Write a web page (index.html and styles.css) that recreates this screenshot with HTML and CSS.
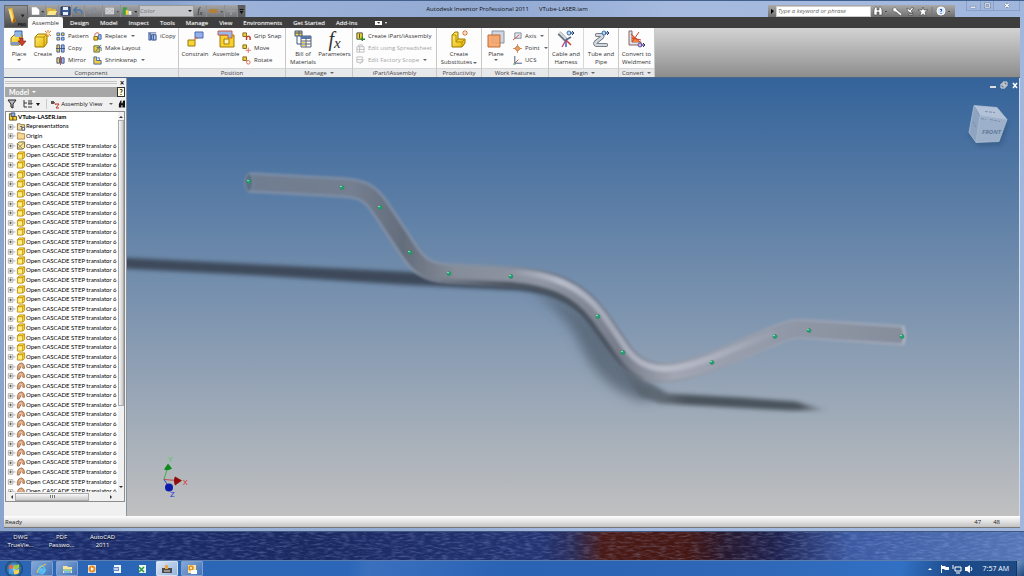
FILE: index.html
```html
<!DOCTYPE html>
<html lang="en">
<head>
<meta charset="utf-8">
<title>Autodesk Inventor Professional 2011</title>
<link rel="stylesheet" href="styles.css">
</head>
<body>
<svg class="sprite" aria-hidden="true">
  <defs>
    <linearGradient id="gold" x1="0" y1="0" x2="1" y2="1"><stop offset="0" stop-color="#fff07a"/><stop offset="1" stop-color="#e8b400"/></linearGradient>
    <symbol id="i-place" viewBox="0 0 18 18"><path d="M5 1h7v6H5z" fill="#8fb4e6" stroke="#3d5f9c"/><path d="M1 8l3-3h8v7l-3 3H1z" fill="url(#gold)" stroke="#8c6a10"/><path d="M5 2h6v5H5z" fill="#8fb4e6"/><path d="M1 12h8v3H1z" fill="#7c98c8"/><path d="M9 8h4v3h3l-4 5-4-5h2V8z" fill="#c9402c" stroke="#7d1c10" stroke-width=".6"/></symbol>
    <symbol id="i-create" viewBox="0 0 18 18"><path d="M1 7l3-3h9v9l-3 4H1z" fill="url(#gold)" stroke="#9a7800"/><path d="M1 7h9v10M10 7l3-3" fill="none" stroke="#b89000"/><path d="M14 0v7M11 1l6 5M17 1l-6 5" stroke="#d8702c"/><circle cx="14" cy="3.500" r="1.500" fill="#ffe9a0"/></symbol>
    <symbol id="i-pattern" viewBox="0 0 10 10"><path d="M1 1h3v3H1zM6 1h3v3H6zM1 6h3v3H1z" fill="#f2cd3c" stroke="#3c62a8"/><path d="M6 6h3v3H6z" fill="#9cbcf0" stroke="#3c62a8"/></symbol>
    <symbol id="i-copy" viewBox="0 0 10 10"><path d="M1 1h3v8H1z" fill="#f2cd3c" stroke="#3c5288"/><path d="M6 1h3v8H6z" fill="#9cbcf0" stroke="#3c5288"/><path d="M0 5h10" stroke="#3c5288"/></symbol>
    <symbol id="i-mirror" viewBox="0 0 10 10"><path d="M1 2h3v6H1z" fill="#f2cd3c" stroke="#3c5288"/><path d="M6 2h3v6H6z" fill="#9cbcf0" stroke="#3c5288"/><path d="M5 0v10" stroke="#c23a2c"/></symbol>
    <symbol id="i-replace" viewBox="0 0 10 10"><path d="M1 5h4v4H1z" fill="#f2cd3c" stroke="#876400"/><path d="M6 3h3v5H6z" fill="#9cbcf0" stroke="#3c62a8"/><path d="M2 4c0-3 3-4 5-2" fill="none" stroke="#c23a2c"/></symbol>
    <symbol id="i-layout" viewBox="0 0 10 10"><path d="M1 2h6v7H1z" fill="#f2cd3c" stroke="#5c6a48"/><path d="M3 8l6-7M4 4h5v4" fill="none" stroke="#48688c"/></symbol>
    <symbol id="i-shrink" viewBox="0 0 10 10"><path d="M1 1h3v4h5v4H1z" fill="#f2cd3c" stroke="#3c62a8"/><path d="M5 2h2v3" fill="none" stroke="#3c62a8"/></symbol>
    <symbol id="i-icopy" viewBox="0 0 10 10"><path d="M1 2h2v7H1zM4 3h5v6H4z" fill="#a8c4f0" stroke="#30508c"/><path d="M0 1h9M6 3v6" stroke="#30508c"/></symbol>
    <symbol id="i-constrain" viewBox="0 0 18 18"><path d="M9 2h8v6H9z" fill="#94b0ec" stroke="#4a68ac"/><path d="M2 10h7v6H2z" fill="#f6d43c" stroke="#9a7800"/><path d="M9 10V8h3" fill="none" stroke="#d85a30"/></symbol>
    <symbol id="i-assemble" viewBox="0 0 18 18"><path d="M3 5h14v12H3z" fill="#f8d030" stroke="#a07c00"/><path d="M7 9h5v5H7z" fill="#fff3c0" stroke="#a07c00"/><path d="M1 1h14v7h-4V5H1z" fill="#9ab8ec" stroke="#c85a44"/></symbol>
    <symbol id="i-grip" viewBox="0 0 10 10"><path d="M1 1h4v4H1z" fill="#f2cd3c" stroke="#7c6410"/><path d="M5 9V6q2-3 4 0v3" fill="none" stroke="#c82c20" stroke-width="1.500"/></symbol>
    <symbol id="i-move" viewBox="0 0 10 10"><path d="M1 1h4v4H1z" fill="#f2cd3c" stroke="#7c6410"/><path d="M7 4v6M4 7h6" stroke="#e0705c"/></symbol>
    <symbol id="i-rotate" viewBox="0 0 10 10"><path d="M1 1h4v4H1z" fill="#f2cd3c" stroke="#7c6410"/><circle cx="7" cy="7" r="2" fill="none" stroke="#e0604c"/></symbol>
    <symbol id="i-bom" viewBox="0 0 18 18"><path d="M1 1h7v5H1z" fill="#f4cf38" stroke="#3c5890"/><path d="M5 1v5M1 3h7M3 6v8h4" fill="none" stroke="#3c5890"/><path d="M7 6h10v11H7z" fill="#fff" stroke="#59616c"/><path d="M7 6h10v3H7z" fill="#5678ac"/><path d="M7 11h10M7 14h10M12 8v9" stroke="#59616c"/><path d="M8 12h3v1H8zM8 15h3v1H8z" fill="#f4cf38"/></symbol>
    <symbol id="i-ipart" viewBox="0 0 10 10"><path d="M1 1h6v7H1z" fill="#f8dc28" stroke="#444"/><path d="M4 2v5" stroke="#333"/><path d="M7 5v5M5 8h5" stroke="#2c8c30" stroke-width="1.500"/></symbol>
    <symbol id="i-sheet" viewBox="0 0 10 10"><path d="M1 3h8v6H1zM3 3V1h4v2M1 6h8M4 3v6" fill="none" stroke="#bbb"/></symbol>
    <symbol id="i-factory" viewBox="0 0 10 10"><path d="M1 1h6v6H1zM1 4h6M4 9l5-5" fill="none" stroke="#bbb"/></symbol>
    <symbol id="i-subst" viewBox="0 0 18 18"><path d="M2 5l3-3h3v7h7v4l-3 4H2z" fill="url(#gold)" stroke="#9a7800"/><path d="M2 5h4v7h6v5M6 12l2-3M12 12l3-3" fill="none" stroke="#b48e00"/><path d="M15 0v6M12 3h6M13 1l4 4M17 1l-4 4" stroke="#d8702c"/><circle cx="15" cy="3" r="1" fill="#fff"/></symbol>
    <symbol id="i-plane" viewBox="0 0 18 18"><path d="M5 1h12v12H5z" fill="#cfd6e0" stroke="#8893a4"/><path d="M1 5h12v12H1z" fill="#f6a368" fill-opacity=".9" stroke="#c06c34"/></symbol>
    <symbol id="i-axis" viewBox="0 0 10 10"><path d="M2 1h7v6H2z" fill="#e4e8ee" stroke="#7c8798"/><path d="M0 9l7-6" stroke="#c8442c"/></symbol>
    <symbol id="i-point" viewBox="0 0 10 10"><path d="M5 0v10M0 5h10" stroke="#c89070"/><path d="M5 2l3 3-3 3-3-3z" fill="#f0a060" stroke="#b86828"/></symbol>
    <symbol id="i-ucs" viewBox="0 0 10 10"><path d="M2 0v8h8" fill="none" stroke="#38507c"/><path d="M2 8l4-4" stroke="#c8442c"/><path d="M0 9h3" stroke="#30904c"/></symbol>
    <symbol id="i-cable" viewBox="0 0 18 18"><path d="M2 3l7 7" stroke="#68737e" stroke-width="4"/><path d="M2 2l7 7" stroke="#d7dde2" stroke-width="2"/><path d="M9 10l-4 7" stroke="#c84c84" stroke-width="1.500"/><path d="M9 10v7" stroke="#3b62be" stroke-width="1.500"/><path d="M9 10l5 5" stroke="#cf3e30" stroke-width="1.500"/><path d="M9 10l5-3" stroke="#50688c" stroke-width="1.500"/><circle cx="12" cy="3" r="2" fill="#b9d7f4" stroke="#3876ac"/><path d="M13 3h4M15 1l2 2-2 2" stroke="#283e70" fill="none"/></symbol>
    <symbol id="i-tube" viewBox="0 0 18 18"><path d="M5 5h4q3 1 0 3l-5 4q-2 2 1 3h9" fill="none" stroke="#59626e" stroke-width="4" stroke-linecap="round"/><path d="M5 5h4q3 1 0 3l-5 4q-2 2 1 3h9" fill="none" stroke="#d2d8de" stroke-width="2.500" stroke-linecap="round"/><circle cx="12" cy="3" r="2" fill="#b9d7f4" stroke="#3876ac"/><path d="M13 3h4M15 1l2 2-2 2" stroke="#283e70" fill="none"/></symbol>
    <symbol id="i-weld" viewBox="0 0 18 18"><path d="M1 1h3v11h9v3H1z" fill="#dfe3e8" stroke="#8c6064"/><path d="M4 5v7h8z" fill="#f2843c"/><path d="M3 4l10 9M11 2L4 12M4 8l9 2" stroke="#c84028"/><circle cx="12" cy="15" r="2" fill="#c6b8ee" stroke="#6850a0"/><path d="M13 15h4M15 13l2 2-2 2" stroke="#303060" fill="none"/></symbol>
    <symbol id="i-cube" viewBox="0 0 10 10"><path d="M1 3l2-2h6v6L7 9H1z" fill="#ffe24a" stroke="#c08c10"/><path d="M1 3h6v6M7 3l2-2" fill="none" stroke="#c08c10"/><path d="M2 4h4v4H2z" fill="#fff08c"/></symbol>
    <symbol id="i-surf" viewBox="0 0 10 10"><path d="M1 9V5q1-4 5-4 3 1 3 6L7 7Q6 4 5 5L3 9z" fill="#dba078" stroke="#a07454"/><path d="M3 4q3-2 3 2" fill="none" stroke="#f6d3b8"/></symbol>
    <symbol id="i-sketch" viewBox="0 0 10 10"><path d="M1 3l2-2h6v6L7 9H1z" fill="#fbe48a" stroke="#6c5c38"/><path d="M1 3l6 6M8 2L2 8" stroke="#7c7c7c"/></symbol>
    <symbol id="i-folder" viewBox="0 0 10 10"><path d="M1 9V2h3l1 1h4v6z" fill="#f8d894" stroke="#b08848"/></symbol>
    <symbol id="i-rep" viewBox="0 0 10 10"><path d="M1 9V2h3l1 1h4v6z" fill="#f8d894" stroke="#807048"/><path d="M4 5h2v3M6 6h3v3H6z" fill="#fff" stroke="#48586c"/></symbol>
    <symbol id="i-asm" viewBox="0 0 10 10"><path d="M1 2h4v7H1z" fill="#f8cc30" stroke="#60501c"/><path d="M3 1h4v4H3z" fill="#8cacdc" stroke="#34507c"/><path d="M5 5h4v4H5z" fill="#f8cc30" stroke="#60501c"/></symbol>
    <symbol id="i-exp" viewBox="0 0 10 10"><path d="M2 3h5v5H2z" fill="#fff" stroke="#a8a8a8"/><path d="M3 5.500h3M4.500 4v3" stroke="#555"/><path d="M7 5.500h3" stroke="#aaa"/></symbol>
  </defs>
</svg>

<main class="window">
  <header class="titlebar">
    <button class="app" aria-label="Application menu">
      <svg viewBox="0 0 22 22"><path d="M3 3l4-1 2 9 2 5-4 2-2-7z" fill="#f3b62c"/><path d="M3 3l3 2 2 8-1 5-2-7z" fill="#fbe08a"/><path d="M9 11l2 5-4 2z" fill="#a85f08"/><path d="M16 9h4l-2 3z" fill="#222"/></svg>
      <span>PRO</span>
    </button>
    <div class="qat">
      <button aria-label="New"><svg viewBox="0 0 18 10"><path d="M4 1h5l3 3v5H4z" fill="#fff"/><path d="M14 5h3l-1 2z" fill="#333"/></svg></button>
      <button aria-label="Open" class="q-s"><svg viewBox="0 0 12 10"><path d="M1 2h4l1 1h4v6H1z" fill="#d9b33c"/><path d="M3 5h8L9 9H1z" fill="#fbe88c"/></svg></button>
      <button aria-label="Save" class="q-s"><svg viewBox="0 0 12 10"><path d="M2 1h9v8H2z" fill="#3d5c94" stroke="#1c315c"/><path d="M4 1h5v3H4zM4 6h5v3H4z" fill="#e6edf6"/></svg></button>
      <button aria-label="Undo" class="q-s"><svg viewBox="0 0 12 10"><path d="M3 4h4q3 0 3 4M5 1L2 4l3 3" fill="none" stroke="#4878ac" stroke-width="1.500"/></svg></button>
      <button aria-label="Redo"><svg viewBox="0 0 18 10"><path d="M11 4H8Q5 4 5 8M9 1l3 3-3 3" fill="none" stroke="#8a8f97" stroke-width="1.500"/></svg></button>
      <button aria-label="Select"><svg viewBox="0 0 18 10"><path d="M3 2h8v6H3zM3 2l8 6M11 2L3 8" fill="#b7bcc2" stroke="#d8dbde"/><path d="M14 5h3l-1 2z" fill="#555"/></svg></button>
      <button aria-label="Appearance"><svg viewBox="0 0 18 10"><path d="M2 1h4v8H2z" fill="#3c9c48"/><path d="M5 4h3v5H5z" fill="#f4d23c"/><path d="M8 5h3v4H8z" fill="#e9eef4"/><path d="M14 5h3l-1 2z" fill="#222"/></svg></button>
      <span class="combo"><select aria-label="Color"><option>Color</option></select></span>
      <button aria-label="Parameters" class="q-s fx">f<sub>x</sub></button>
      <button aria-label="Measure"><svg viewBox="0 0 18 10"><path d="M2 3h9v4H2z" fill="#b57f3a"/><path d="M14 5h3l-1 2z" fill="#555"/></svg></button>
      <button aria-label="Add" class="q-s"><svg viewBox="0 0 12 10"><path d="M6 1v8M2 5h8" stroke="#94979b" stroke-width="2"/></svg></button>
      <button aria-label="Customize" class="q-x"><svg viewBox="0 0 6 10"><path d="M1 3h4v1H1zM1 5h4L3 8z" fill="#111"/></svg></button>
    </div>
    <h1 class="title"><span>Autodesk Inventor Professional 2011</span><span>VTube-LASER.iam</span></h1>
    <form class="search">
      <svg class="s-arrow" viewBox="0 0 6 10"><path d="M2 3l3 2-3 3z" fill="#000"/></svg>
      <input type="text" aria-label="Search" placeholder="Type a keyword or phrase">
      <svg class="s-icons" viewBox="0 0 84 12"><g fill="#fff" stroke="#333" stroke-width=".5"><path d="M3 10V5l1-3h2v3h2V2h2l1 3v5H8V7H6v3z"/><path d="M22 3q3-2 4 2l5 4-1 2-5-4q-4 0-3-4z"/><path d="M36 3q0 5 6 5l-2-2 3-3h-3l-1 2zM37 10h5v-1h-4z"/><path d="M52 2l1 3h4L54 7l1 4-3-2-3 2 1-4-3-2h4z"/></g><path d="M14 6h2l-1 1zM77 6h2l-1 1z" fill="#111"/><path d="M61 2v8" stroke="#777"/><circle cx="70" cy="6" r="4" fill="#dce9fb" stroke="#fff"/><path d="M69 5q1-2 2 0l-1 1v1M70 8v1" fill="none" stroke="#2858ac"/></svg>
    </form>
    <div class="winctl">
      <button aria-label="Minimize"><svg viewBox="0 0 10 10"><path d="M2 6h6v2H2z" fill="#fff" stroke="#5c6c88" stroke-width=".5"/></svg></button>
      <button aria-label="Maximize"><svg viewBox="0 0 10 10"><path d="M3 3h5v4H3z" fill="none" stroke="#5c6c88" stroke-width="2"/><path d="M3 3h5v4H3z" fill="none" stroke="#fff"/></svg></button>
      <button aria-label="Close"><svg viewBox="0 0 10 10"><path d="M3 3l4 4M7 3L3 7" stroke="#5c6c88" stroke-width="2.500"/><path d="M3 3l4 4M7 3L3 7" stroke="#fff" stroke-width="1.500"/></svg></button>
    </div>
  </header>

  <nav class="tabs">
    <button class="on">Assemble</button><button>Design</button><button>Model</button><button>Inspect</button><button>Tools</button><button>Manage</button><button>View</button><button>Environments</button><button>Get Started</button><button>Add-Ins</button>
    <button class="tab-min" aria-label="Minimize ribbon"><svg viewBox="0 0 14 8"><path d="M1 2h7v4H1z" fill="#fff"/><path d="M3 3h3l-1 2z" fill="#333"/><path d="M11 3h2l-1 2z" fill="#fff"/></svg></button>
  </nav>

  <section class="ribbon">
    <section class="panel p-component">
      <div class="tools">
        <button class="big b-24"><svg><use href="#i-place"/></svg>Place<i class="dd"></i></button>
        <button class="big b-24"><svg><use href="#i-create"/></svg>Create</button>
        <div class="col c-37">
          <button><svg><use href="#i-pattern"/></svg>Pattern</button>
          <button><svg><use href="#i-copy"/></svg>Copy</button>
          <button><svg><use href="#i-mirror"/></svg>Mirror</button>
        </div>
        <div class="col c-55">
          <button><svg><use href="#i-replace"/></svg>Replace<i class="dd"></i></button>
          <button><svg><use href="#i-layout"/></svg>Make Layout</button>
          <button><svg><use href="#i-shrink"/></svg>Shrinkwrap<i class="dd"></i></button>
        </div>
        <div class="col">
          <button><svg><use href="#i-icopy"/></svg>iCopy</button>
        </div>
      </div>
      <h2>Component</h2>
    </section>
    <section class="panel p-position">
      <div class="tools">
        <button class="big b-32"><svg><use href="#i-constrain"/></svg>Constrain</button>
        <button class="big b-30"><svg><use href="#i-assemble"/></svg>Assemble</button>
        <div class="col">
          <button><svg><use href="#i-grip"/></svg>Grip Snap</button>
          <button><svg><use href="#i-move"/></svg>Move</button>
          <button><svg><use href="#i-rotate"/></svg>Rotate</button>
        </div>
      </div>
      <h2>Position</h2>
    </section>
    <section class="panel p-manage">
      <div class="tools">
        <button class="big b-30"><svg><use href="#i-bom"/></svg><span>Bill of<br>Materials</span></button>
        <button class="big b-33"><span class="bigfx">f<sub>x</sub></span>Parameters</button>
      </div>
      <h2>Manage<i class="dd"></i></h2>
    </section>
    <section class="panel p-ipart">
      <div class="tools">
        <div class="col">
          <button><svg><use href="#i-ipart"/></svg>Create iPart/iAssembly</button>
          <button disabled><svg><use href="#i-sheet"/></svg>Edit using Spreadsheet</button>
          <button disabled><svg><use href="#i-factory"/></svg>Edit Factory Scope<i class="dd"></i></button>
        </div>
      </div>
      <h2>iPart/iAssembly</h2>
    </section>
    <section class="panel p-prod">
      <div class="tools">
        <button class="big b-fill"><svg><use href="#i-subst"/></svg><span>Create</span><span class="row">Substitutes<i class="dd"></i></span></button>
      </div>
      <h2>Productivity</h2>
    </section>
    <section class="panel p-work">
      <div class="tools">
        <button class="big b-24"><svg><use href="#i-plane"/></svg>Plane<i class="dd"></i></button>
        <div class="col">
          <button><svg><use href="#i-axis"/></svg>Axis<i class="dd"></i></button>
          <button><svg><use href="#i-point"/></svg>Point<i class="dd"></i></button>
          <button><svg><use href="#i-ucs"/></svg>UCS</button>
        </div>
      </div>
      <h2>Work Features</h2>
    </section>
    <section class="panel p-begin">
      <div class="tools split">
        <button class="big b-fill"><svg><use href="#i-cable"/></svg><span>Cable and<br>Harness</span></button>
        <button class="big b-fill"><svg><use href="#i-tube"/></svg><span>Tube and<br>Pipe</span></button>
      </div>
      <h2>Begin<i class="dd"></i></h2>
    </section>
    <section class="panel p-convert">
      <div class="tools">
        <button class="big b-fill"><svg><use href="#i-weld"/></svg><span>Convert to<br>Weldment</span></button>
      </div>
      <h2>Convert<i class="dd"></i></h2>
    </section>
  </section>

  <div class="work">
    <aside class="browser">
      <div class="grip"><span></span><button aria-label="Close panel">×</button></div>
      <div class="b-head"><button>Model<i class="dd"></i></button><button class="help" aria-label="Help">?</button></div>
      <div class="b-tools">
        <button aria-label="Filter"><svg viewBox="0 0 10 10"><path d="M1 1h8L6 5v4L4 8V5z" fill="#b8bcc0" stroke="#222"/></svg></button>
        <button aria-label="Display"><svg viewBox="0 0 20 10"><path d="M2 1v7h3M2 4h3M6 2h4M6 4h4v1H6M6 8h4" fill="none" stroke="#333"/><path d="M14 4h4l-2 3z" fill="#111"/></svg></button>
        <button class="view"><svg viewBox="0 0 10 10"><path d="M1 2h3v3H1z" fill="#555"/><path d="M6 5h3L6 9h3" fill="none" stroke="#c03020"/><path d="M4 3l2 3" stroke="#c03020"/></svg>Assembly View<i class="dd"></i></button>
        <button aria-label="Find"><svg viewBox="0 0 8 10"><path d="M1 9V5l2-4h1v3h1l1-3h2v8H5V6H4v3z" fill="#111"/></svg></button>
      </div>
      <div class="treebox">
        <div class="treerow">
          <ul class="tree" id="tree"></ul>
          <div class="vbar"><svg viewBox="0 0 6 6"><path d="M1 4h4L3 2z"/></svg><span></span><svg viewBox="0 0 6 6"><path d="M1 2h4L3 4z"/></svg></div>
        </div>
        <div class="hbar"><svg viewBox="0 0 6 6"><path d="M4 1v4L2 3z"/></svg><span></span><svg viewBox="0 0 6 6"><path d="M2 1v4l2-2z"/></svg></div>
      </div>
    </aside>

    <section class="viewport">
      <svg viewBox="127 78 892 439" preserveAspectRatio="xMidYMid slice" role="img" aria-label="Bent tube model">
        <defs>
          <filter id="b1" x="-10%" y="-10%" width="120%" height="120%"><feGaussianBlur stdDeviation="0.9"/></filter>
          <filter id="b2" x="-10%" y="-30%" width="120%" height="160%"><feGaussianBlur stdDeviation="2"/></filter>
          <filter id="b5" x="-30%" y="-30%" width="160%" height="160%"><feGaussianBlur stdDeviation="6"/></filter>
          <linearGradient id="edge" gradientUnits="userSpaceOnUse" x1="245" y1="0" x2="905" y2="0"><stop offset="0" stop-color="#8793a8"/><stop offset=".38" stop-color="#8b929e"/><stop offset=".48" stop-color="#6e7583"/><stop offset=".57" stop-color="#6c727e"/><stop offset=".64" stop-color="#9599a6"/><stop offset="1" stop-color="#a2a9b8"/></linearGradient>
          <linearGradient id="core" gradientUnits="userSpaceOnUse" x1="245" y1="0" x2="905" y2="0"><stop offset="0" stop-color="#707d90"/><stop offset=".16" stop-color="#747f90"/><stop offset=".24" stop-color="#646d7c"/><stop offset=".32" stop-color="#868d9a"/><stop offset=".45" stop-color="#9096a3"/><stop offset=".57" stop-color="#777d8b"/><stop offset=".65" stop-color="#a2a6b3"/><stop offset=".8" stop-color="#9299a8"/><stop offset="1" stop-color="#858d9b"/></linearGradient>
          <linearGradient id="lite" gradientUnits="userSpaceOnUse" x1="510" y1="0" x2="790" y2="0"><stop offset="0" stop-color="#b8bdcb" stop-opacity="0"/><stop offset=".18" stop-color="#b8bdcb"/><stop offset=".36" stop-color="#a4a9b8"/><stop offset=".55" stop-color="#babdc9"/><stop offset="1" stop-color="#b8bdcb" stop-opacity="0"/></linearGradient>
          <linearGradient id="shade" gradientUnits="userSpaceOnUse" x1="430" y1="0" x2="650" y2="0"><stop offset="0" stop-color="#4a525f" stop-opacity="0"/><stop offset=".35" stop-color="#4a525f"/><stop offset=".8" stop-color="#4a525f"/><stop offset="1" stop-color="#4a525f" stop-opacity="0"/></linearGradient>
          <linearGradient id="tail" gradientUnits="userSpaceOnUse" x1="625" y1="0" x2="830" y2="0"><stop offset="0" stop-color="#4a525c" stop-opacity=".3"/><stop offset=".3" stop-color="#4a525c"/><stop offset=".85" stop-color="#4a525c"/><stop offset="1" stop-color="#4a525c" stop-opacity="0"/></linearGradient>
          <path id="run" d="M249 183L342 188C362 189 370 193 380 208L410 253C420 268 430 273 449 274L511 277C555 279 580 292 598 317L623 353C640 376 665 380 712 362L775 336C792 329 796 329 809 330L904 336"/>
        </defs>
        <path d="M120 258L260 265 400 272 520 278Q575 284 604 330L594 326Q570 296 520 291L400 285 260 276 120 269z" fill="#3d4a5a" filter="url(#b2)"/>
        <path d="M530 290Q575 300 602 332L630 372 662 398 640 401Q600 388 580 345 565 312 530 290z" fill="#4c5968" fill-opacity=".7" filter="url(#b5)"/>
        <path d="M618 368L640 378 668 394 740 398 795 402 828 411 790 411 660 404 640 397z" fill="url(#tail)" filter="url(#b2)"/>
        <g fill="none" stroke-linejoin="round" filter="url(#b1)">
          <use href="#run" stroke="url(#edge)" stroke-width="21" stroke-opacity=".7"/>
          <use href="#run" stroke="url(#core)" stroke-width="15"/>
          <path d="M440 281L511 285C548 288 572 298 590 322L616 358Q628 374 643 380" stroke="url(#shade)" stroke-width="5" filter="url(#b1)"/>
          <path d="M511 272C555 275 582 288 603 315L627 350C643 371 665 376 710 359L775 333" stroke="url(#lite)" stroke-width="6" filter="url(#b1)"/>
          <ellipse cx="249" cy="183" rx="4" ry="9" fill="#596f84" stroke="#8793a5"/>
          <path d="M903 327Q906 336 903 345" stroke="#acb2c0" stroke-width="3"/>
        </g>
        <g fill="#14a86a" stroke="#3c7c68" stroke-width=".6">
          <circle cx="249" cy="182" r="2"/><circle cx="342" cy="188" r="2"/><circle cx="380" cy="208" r="2"/><circle cx="410" cy="253" r="2"/><circle cx="449" cy="274" r="2"/><circle cx="511" cy="277" r="2"/><circle cx="598" cy="317" r="2"/><circle cx="623" cy="353" r="2"/><circle cx="712" cy="363" r="2"/><circle cx="775" cy="337" r="2"/><circle cx="809" cy="331" r="2"/><circle cx="902" cy="337" r="2"/>
        </g>
        <g fill="#a8f0cc"><circle cx="248" cy="181" r=".8"/><circle cx="341" cy="187" r=".8"/><circle cx="379" cy="207" r=".8"/><circle cx="409" cy="252" r=".8"/><circle cx="448" cy="273" r=".8"/><circle cx="510" cy="276" r=".8"/><circle cx="597" cy="316" r=".8"/><circle cx="622" cy="352" r=".8"/><circle cx="711" cy="362" r=".8"/><circle cx="774" cy="336" r=".8"/><circle cx="808" cy="330" r=".8"/><circle cx="901" cy="336" r=".8"/></g>
        <g>
          <path d="M164 480l3-10" stroke="#3cae4c"/><path d="M164 480l13 1" stroke="#c04848"/><path d="M164 480l4 6" stroke="#3c48b0"/>
          <path d="M164 470l4-6 4 5q-4 3-8 1z" fill="#0a8c1c"/><path d="M175 477l7 4-7 5q-2-5 0-9z" fill="#900c0c"/><circle cx="169" cy="488" r="4" fill="#0c1ca8"/>
          <g class="axes"><text x="168" y="462" fill="#3cd048">Y</text><text x="183" y="485" fill="#e02020">X</text><text x="170" y="497" fill="#2030e0">Z</text></g>
        </g>
        <g>
          <path d="M967 134L978 147 1002 146 1009 122z" fill="#2f4f78" opacity=".45" filter="url(#b2)"/>
          <path d="M974 106L997 108 1007 120 980 116z" fill="#b3c2d6"/><path d="M974 106L980 116 976 143 969 133z" fill="#8ea4c0"/><path d="M980 116L1007 120 999 142 976 143z" fill="#9cb0ca"/>
          <path d="M974 106L997 108 1007 120 999 142 976 143 969 133zM980 116L1007 120M980 116L976 143" fill="none" stroke="#b4c4d8" stroke-width=".7"/>
          <path d="M985 112l10 1M981 119l5 1M990 120l10 2M973 122l3 6" stroke="#7a90ae" stroke-dasharray="3 1"/>
          <text class="cube" x="982" y="134">FRONT</text>
        </g>
      </svg>
      <div class="docctl">
        <button aria-label="Minimize document"><svg viewBox="0 0 8 8"><path d="M1 5h6v2H1z" fill="#ddd"/></svg></button>
        <button aria-label="Restore document"><svg viewBox="0 0 8 8"><path d="M3 1h4v4H3zM1 3h4v4H1z" fill="#678" stroke="#ddd"/></svg></button>
        <button aria-label="Close document"><svg viewBox="0 0 8 8"><path d="M2 2l4 5M6 2L2 7" stroke="#fff" stroke-width="1.500"/></svg></button>
      </div>
    </section>
  </div>

  <footer class="status"><span>Ready</span><span>47</span><span>48</span></footer>
</main>

<section class="desktop">
  <svg class="ripples" preserveAspectRatio="none" aria-hidden="true"><filter id="rip" x="0" y="0" width="100%" height="100%"><feTurbulence type="fractalNoise" baseFrequency="0.120 0.500" numOctaves="2" seed="4"/><feColorMatrix values="0 0 0 0 .45  0 0 0 0 .55  0 0 0 0 .9  2.400 0 0 0 -1"/></filter><rect width="100%" height="100%" filter="url(#rip)"/></svg>
  <a href="#dwg">DWG<br>TrueVie...</a>
  <a href="#pdf">PDF<br>Passwo...</a>
  <a href="#acad">AutoCAD<br>2011</a>
</section>

<nav class="taskbar">
  <button class="orb" aria-label="Start"><svg viewBox="0 0 20 16"><defs><radialGradient id="orb"><stop offset="0" stop-color="#9fd8f4"/><stop offset=".6" stop-color="#3b82b8"/><stop offset="1" stop-color="#17406c"/></radialGradient></defs><circle cx="10" cy="8" r="9" fill="url(#orb)"/><path d="M5 5q2-2 4-1v4q-2-1-4 0z" fill="#f0683c"/><path d="M10 4q2 1 5-1v4q-3 2-5 1z" fill="#9ccc3c"/><path d="M5 9q2-2 4 0v4q-2-1-4 0z" fill="#4c9cec"/><path d="M10 9q2 1 5-1v4q-3 2-5 1z" fill="#fcd048"/></svg></button>
  <button class="task open" aria-label="Internet Explorer"><svg viewBox="0 0 12 12"><path d="M9 7H4q1 3 5 1-2 4-5 2t0-7q4-1 5 4M4 6h3" fill="none" stroke="#58c0f4" stroke-width="1.500"/><path d="M1 10Q1 5 10 1" fill="none" stroke="#f4c63c"/></svg></button>
  <button class="task open" aria-label="Explorer"><svg viewBox="0 0 12 12"><path d="M2 3h4l1 1h4v6H2z" fill="#f8e49c"/><path d="M2 6h9v2H2z" fill="#a0cc90"/><path d="M3 8h7v2H3z" fill="#80b8e8"/></svg></button>
  <button class="task" aria-label="Media Player"><svg viewBox="0 0 12 12"><path d="M2 2h8v8H2z" fill="#dce6f2"/><circle cx="6" cy="6" r="3.500" fill="#ec8c24"/><path d="M5 4l3 2-3 2z" fill="#fff"/></svg></button>
  <button class="task" aria-label="Word"><svg viewBox="0 0 12 12"><path d="M3 2h7v8H3z" fill="#eef4fc"/><path d="M2 4h6v4H2z" fill="#5f86c4"/><path d="M3 5l1 2 1-2 1 2 1-2" fill="none" stroke="#fff" stroke-width=".7"/></svg></button>
  <button class="task" aria-label="Excel"><svg viewBox="0 0 12 12"><path d="M3 2h7v8H3z" fill="#e8f8e8"/><path d="M3 4l5 5M8 4L3 9" stroke="#2c9448" stroke-width="1.500"/></svg></button>
  <button class="task active" aria-label="Inventor"><svg viewBox="0 0 12 12"><path d="M1 5h10v5H1z" fill="#4c4c4c"/><path d="M4 2h3v4H4z" fill="#eca43c"/><path d="M3 8h6" stroke="#ddd"/></svg></button>
  <button class="task open" aria-label="Outlook"><svg viewBox="0 0 12 12"><path d="M2 2h8v8H2z" fill="#fbe3a4"/><circle cx="5" cy="5" r="2" fill="none" stroke="#e08c1c" stroke-width="1.500"/><path d="M5 7h6v4H5z" fill="#fff"/></svg></button>
  <div class="tray">
    <svg viewBox="0 0 48 12"><g fill="#fff"><path d="M3 7h4L5 5z"/><path d="M16 2h1v8h-1zM17 3h3l1 1h3v3h-4l-1-1h-2z"/><path d="M42 4l3-2v8l-3-2h-2V4z"/></g><path d="M30 4h6v4h-6zM31 10h4M28 2v4" fill="none" stroke="#fff"/><path d="M46 4q2 2 0 4" fill="none" stroke="#fff"/></svg>
    <time>7:57 AM</time>
  </div>
  <button class="peek" aria-label="Show desktop"></button>
</nav>
<script src="tree.js"></script>
</body>
</html>
```
FILE: tree.js
```js
const rows = [
  { icon: "asm", text: "VTube-LASER.iam", root: true },
  { icon: "rep", text: "Representations" },
  { icon: "folder", text: "Origin" },
  { icon: "sketch", text: "Open CASCADE STEP translator 6" }
];
for (let i = 0; i < 22; i++) rows.push({ icon: "cube", text: "Open CASCADE STEP translator 6" });
for (let i = 0; i < 14; i++) rows.push({ icon: "surf", text: "Open CASCADE STEP translator 6" });

document.getElementById("tree").innerHTML = rows.map(r =>
  `<li${r.root ? ' class="root"' : ""}>` +
  (r.root ? "" : '<svg><use href="#i-exp"/></svg>') +
  `<svg><use href="#i-${r.icon}"/></svg><span>${r.text}</span></li>`
).join("");
```
FILE: styles.css
```css
* { box-sizing: border-box; }
body {
  margin: 0;
  height: 100vh;
  display: grid;
  grid-template-rows: minmax(0, 1fr) 28px 16px;
  font: 6px/8px "Open Sans", "Noto Sans", sans-serif;
  color: #333;
  background: #1c2a66;
  overflow: hidden;
}
button {
  font: inherit;
  color: inherit;
  background: none;
  border: 0;
  padding: 0;
  margin: 0;
}
h1, h2, ul { margin: 0; padding: 0; font: inherit; }
svg { display: block; flex: none; }
.sprite { position: absolute; width: 0; height: 0; }
.dd {
  flex: none;
  width: 0;
  height: 0;
  border: 2px solid transparent;
  border-top-color: #666;
  border-bottom: 0;
}

/* window frame */
.window {
  display: flex;
  flex-direction: column;
  min-width: 0;
  padding: 0 4px 3px;
  border-top: 1px solid #42608e;
  border-bottom: 1px solid #42577c;
  background: linear-gradient(100deg, #8da6cf, #8aa2cc 15%, #9db3d9 20%, #92a9d2 45%, #a6badf 60%, #9fb6dc);
}
.titlebar { display: flex; height: 16px; flex: none; }
.app {
  position: relative;
  z-index: 1;
  width: 24px;
  height: 23px;
  margin-top: 4px;
  background: linear-gradient(#929292, #4a4a4a);
  border: 1px solid #666;
}
.app svg { width: 22px; height: 21px; }
.app span { position: absolute; right: 1px; bottom: 0; font-size: 4px; line-height: 5px; color: #111; font-weight: 700; }
.qat {
  display: flex;
  align-items: stretch;
  height: 12px;
  margin-top: 4px;
  background: linear-gradient(#a3a5a8, #737578);
  color: #222;
}
.qat button { width: 18px; border-right: 1px solid #8d9094; }
.qat .q-s { width: 13px; }
.qat .q-x { width: 8px; background: #5b5d60; }
.qat svg { width: 100%; height: 10px; }
.fx { font: italic 8px/10px "Liberation Serif", serif; }
.fx sub, .bigfx sub { font-size: 75%; line-height: 1; vertical-align: -2px; }
.combo { display: flex; width: 55px; position: relative; }
.combo::after {
  content: "";
  position: absolute;
  right: 2px;
  top: 5px;
  border: 2px solid transparent;
  border-top-color: #111;
  border-bottom: 0;
}
.combo select {
  appearance: none;
  width: 100%;
  border: 1px solid #999;
  padding: 0;
  font: inherit;
  background: #c3c5c8;
  color: #777;
}
.title { flex: 1; display: flex; justify-content: center; gap: 10px; padding-top: 4px; color: #111; white-space: nowrap; }
.search {
  display: flex;
  align-items: center;
  width: 187px;
  height: 12px;
  margin-top: 4px;
  background: linear-gradient(#a9a9a9, #6f6f6f);
}
.s-arrow { width: 8px; height: 10px; }
.search input {
  width: 95px;
  height: 11px;
  border: 1px solid #ccc;
  padding: 0 1px;
  background: #fff;
  font: italic 6px/8px "Open Sans", sans-serif;
}
.search input::placeholder { color: #666; opacity: 1; }
.s-icons { width: 84px; height: 12px; }
.winctl { display: flex; width: 54px; height: 10px; margin-left: 11px; border: 1px solid #8aa0c6; border-top: 0; }
.winctl button { flex: 1; border-right: 1px solid #8aa0c6; display: grid; place-items: center; }
.winctl button:last-child { flex: 2; border: 0; }
.winctl svg { width: 10px; height: 9px; }

/* ribbon */
.tabs { display: flex; flex: none; height: 11px; padding-left: 24px; background: #3e3e3e; color: #f2f2f2; }
.tabs button { padding: 0 6px 0 5px; line-height: 10px; text-shadow: 0 0 1px #bbb; }
.tabs .on { background: linear-gradient(#f6f6f6, #fff); color: #333; border-radius: 2px 2px 0 0; text-shadow: none; padding: 0 4px; margin-right: 2px; }
.tabs .tab-min { margin-left: 6px; }
.tab-min svg { width: 14px; height: 8px; }
.ribbon { display: flex; flex: none; height: 50px; background: linear-gradient(#d3d3d3, #8d8d8d); border-bottom: 1px solid #4d6584; }
.panel { display: flex; flex-direction: column; flex: none; background: #fdfdfd; border-right: 1px solid #c8c8c8; white-space: nowrap; }
.panel h2 { display: flex; justify-content: center; align-items: center; gap: 3px; height: 9px; background: #e7e8ea; border-top: 1px solid #d6d6d6; color: #444; }
.tools { display: flex; flex: 1; min-height: 0; }
.p-component { width: 175px; }
.p-component .tools { padding-left: 3px; }
.p-position { width: 107px; }
.p-manage { width: 67px; }
.p-ipart { width: 84px; }
.p-prod { width: 45px; }
.p-work { width: 67px; }
.p-begin { width: 70px; }
.p-convert { width: 36px; }
.big { display: flex; flex-direction: column; align-items: center; padding-top: 2px; white-space: nowrap; text-align: center; }
.big svg { width: 18px; height: 18px; margin-bottom: 2px; }
.big .dd { margin-top: 1px; }
.b-24 { width: 24px; }
.b-30 { width: 30px; }
.b-32 { width: 32px; }
.b-33 { width: 33px; }
.b-fill { flex: 1; }
.split .big + .big { border-left: 1px solid #d8d8d8; }
.row { display: flex; align-items: center; gap: 1px; }
.bigfx { font: italic 20px/18px "Liberation Serif", serif; height: 18px; margin-bottom: 2px; color: #333; }
.col { display: flex; flex-direction: column; padding: 2px 0 0 1px; }
.col button { display: flex; align-items: center; gap: 3px; height: 12px; }
.col button:disabled { color: #a5a5a5; }
.col svg { width: 9px; height: 9px; }
.col .dd { margin-left: 1px; }
.c-37 { width: 37px; }
.c-55 { width: 55px; }
.p-ipart .col { padding-left: 3px; }
.p-work .col { padding-left: 5px; }
.p-work .b-24, .p-manage .b-30 { margin-left: 2px; }

/* model browser */
.work { display: flex; flex: 1; min-height: 0; }
.browser { display: flex; flex-direction: column; width: 123px; flex: none; padding: 0 1px 14px; background: #f0f0f0; border-right: 1px solid #8a949f; }
.grip { display: flex; align-items: center; gap: 2px; height: 9px; }
.grip span { flex: 1; height: 3px; border: solid #c4c4c4; border-width: 1px 0; }
.grip button { width: 6px; font-weight: 700; font-size: 8px; color: #111; }
.b-head { display: flex; height: 10px; background: #a6a6a6; color: #fff; font: 700 7px/10px Lato, sans-serif; }
.b-head button { display: flex; align-items: center; gap: 3px; padding-left: 4px; }
.b-head .dd { border-top-color: #fff; }
.b-head .help { margin-left: auto; width: 8px; padding: 0; justify-content: center; background: #fffbe0; border: 1px solid #333; color: #111; line-height: 8px; }
.b-tools { display: flex; align-items: center; justify-content: space-between; height: 14px; padding-left: 2px; overflow: hidden; color: #111; white-space: nowrap; }
.b-tools button { display: flex; align-items: center; gap: 1px; }
.b-tools svg { width: 10px; height: 10px; }
.b-tools button:nth-child(2) svg { width: 20px; }
.b-tools button:last-child svg { width: 7px; }
.view .dd { margin-left: 6px; }
.view { border-left: 1px solid #ccc; padding-left: 3px; }
.treebox { display: flex; flex-direction: column; flex: 1; min-height: 0; border: 1px solid #8c8c8c; background: #fff; }
.treerow { display: flex; flex: 1; min-height: 0; overflow: hidden; }
.tree {
  flex: 1;
  min-width: 0;
  display: grid;
  grid-auto-rows: minmax(0, 1fr);
  margin-bottom: -4px;
  list-style: none;
  font: 6px/8px Lato, sans-serif;
  color: #000;
}
.tree li { display: flex; align-items: center; white-space: nowrap; }
.tree svg { width: 10px; height: 9px; }
.tree .root { font-weight: 700; padding-left: 2px; }
.vbar { display: flex; flex-direction: column; align-items: center; width: 6px; background: #f1f1f1; padding: 2px 0; }
.vbar svg, .hbar svg { width: 6px; height: 6px; fill: #333; }
.vbar span { width: 6px; height: 76%; margin-bottom: auto; border: 1px solid #aaa; background: linear-gradient(90deg, #f8f8f8, #c8c8c8); }
.hbar { display: flex; align-items: center; height: 9px; background: #f1f1f1; padding: 0 10px 0 3px; }
.hbar span { width: 74px; height: 8px; margin-right: auto; border: 1px solid #aaa; background: repeating-linear-gradient(90deg, #777 0 1px, #eee 1px 2px) center / 5px 3px no-repeat, linear-gradient(#f8f8f8, #c8c8c8); }

/* 3D view */
.viewport { position: relative; flex: 1; min-width: 0; background: linear-gradient(#34639a, #7b93af 52%, #c0c0c0); border-right: 1px solid #d0dcec; }
.viewport > svg { width: 100%; height: 100%; }
.axes { font: 8px "Open Sans", sans-serif; }
.cube { font: italic 700 6px "Open Sans", sans-serif; fill: #637a9b; }
.docctl { position: absolute; top: 3px; right: 0; display: flex; gap: 3px; }
.docctl svg { width: 8px; height: 8px; }
.status { display: flex; flex: none; height: 12px; padding: 0 20px 0 1px; gap: 12px; background: linear-gradient(#fff, #c2c2c2); line-height: 13px; color: #222; border-bottom: 1px solid #777; }
.status span:first-child { margin-right: auto; }

/* desktop */
.desktop {
  position: relative;
  display: flex;
  overflow: hidden;
  background: linear-gradient(90deg, #1d2f70, #1b2961 30%, #233473 53%, #2a2b55 56%, #4a1a16 59%, #451712 67%, #27182e 71%, #1f2350 76%, #3c5aa2 83%, #5576b8 100%);
}
.ripples { position: absolute; inset: 0; width: 100%; height: 100%; opacity: .25; }
.desktop a { position: relative; width: 41px; color: #fff; text-align: center; text-decoration: none; padding-top: 1px; text-shadow: 0 1px 1px #000; }
.taskbar { display: flex; align-items: stretch; background: linear-gradient(100deg, #2b65b4, #2c66b8 34%, #3a70be 36%, #2a62b4 50%, #2f68b8 75%, #3270c4 88%, #1c4a88 93%, #1d4a86); border-top: 1px solid #5b7eae; }
.orb { width: 28px; display: grid; place-items: center; }
.orb svg { width: 20px; height: 16px; }
.task { width: 22px; margin-left: 3px; display: grid; place-items: center; border-radius: 1px; }
.task svg { width: 12px; height: 12px; }
.open { background: linear-gradient(135deg, #86a8d8, #4474b8); border: 1px solid #7f9fce; }
.active { background: linear-gradient(135deg, #dce7f5, #94b2dc); border: 1px solid #d3e0f1; }
.tray { display: flex; align-items: center; gap: 10px; margin-left: auto; color: #fff; font-size: 7px; }
.tray svg { width: 48px; height: 12px; }
.peek { width: 8px; margin-left: 7px; border-left: 1px solid #17345c; background: linear-gradient(135deg, #6f97c8, #20487c); }
```
